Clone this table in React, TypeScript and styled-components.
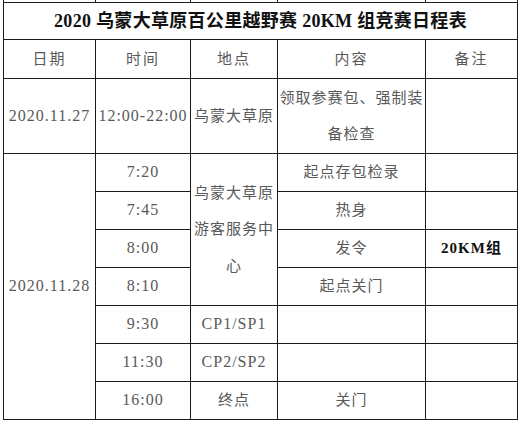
import React from "react";
import styled, { createGlobalStyle } from "styled-components";

const Global = createGlobalStyle`
  body {
    margin: 0;
    background: #fff;
    font-family: "Liberation Serif", "Noto Sans CJK SC", serif;
  }
`;

const Sheet = styled.table`
  border-collapse: collapse;
  table-layout: fixed;
  width: 514px;
  margin-left: 3px;
  color: #555;
`;

const Row = styled.tr<{ $h: number }>`
  height: ${(p) => p.$h}px;
`;

const Cell = styled.td<{ $tone?: "title" | "head" | "mark" }>`
  border: 1px solid #1a1a1a;
  padding: 0;
  text-align: center;
  vertical-align: middle;
  font-size: ${(p) => (p.$tone === "title" ? 18 : 15)}px;
  font-weight: ${(p) => (p.$tone === "title" || p.$tone === "mark" ? 700 : 400)};
  color: ${(p) => (p.$tone === "title" || p.$tone === "mark" ? "#111" : "#595959")};
  letter-spacing: ${(p) => (p.$tone === "head" ? 2 : p.$tone === "title" ? 0.3 : 1)}px;
  line-height: 36.5px;
  white-space: nowrap;
`;

const Edge = styled.td`
  border: 1px solid #1a1a1a;
  border-top: none;
  padding: 0;
  font-size: 0;
`;

const Num = styled.span`
  font-family: "Liberation Serif", serif;
  font-size: 16px;
  letter-spacing: 1px;
`;

type Slot = { time: string; place?: React.ReactNode; span?: number; what?: string; note?: string };

const slots: Slot[] = [
  { time: "7:20", place: <>乌蒙大草原<br />游客服务中<br />心</>, span: 4, what: "起点存包检录" },
  { time: "7:45", what: "热身" },
  { time: "8:00", what: "发令", note: "20KM组" },
  { time: "8:10", what: "起点关门" },
  { time: "9:30", place: <Num>CP1/SP1</Num>, span: 1 },
  { time: "11:30", place: <Num>CP2/SP2</Num>, span: 1 },
  { time: "16:00", place: "终点", span: 1, what: "关门" },
];

export default function App() {
  return (
    <>
      <Global />
      <Sheet>
        <colgroup>
          <col style={{ width: 92 }} />
          <col style={{ width: 95 }} />
          <col style={{ width: 87 }} />
          <col style={{ width: 148 }} />
          <col style={{ width: 92 }} />
        </colgroup>
        <tbody>
          <Row $h={2}>
            <Edge />
            <Edge />
            <Edge />
            <Edge />
            <Edge />
          </Row>
          <Row $h={36}>
            <Cell colSpan={5} $tone="title">
              2020 乌蒙大草原百公里越野赛 20KM 组竞赛日程表
            </Cell>
          </Row>
          <Row $h={39}>
            <Cell $tone="head">日期</Cell>
            <Cell $tone="head">时间</Cell>
            <Cell $tone="head">地点</Cell>
            <Cell $tone="head">内容</Cell>
            <Cell $tone="head">备注</Cell>
          </Row>
          <Row $h={75}>
            <Cell><Num>2020.11.27</Num></Cell>
            <Cell><Num>12:00-22:00</Num></Cell>
            <Cell>乌蒙大草原</Cell>
            <Cell>领取参赛包、强制装<br />备检查</Cell>
            <Cell />
          </Row>
          {slots.map((s, i) => (
            <Row $h={38} key={s.time}>
              {i === 0 && (
                <Cell rowSpan={slots.length}><Num>2020.11.28</Num></Cell>
              )}
              <Cell><Num>{s.time}</Num></Cell>
              {s.span && <Cell rowSpan={s.span}>{s.place}</Cell>}
              <Cell>{s.what}</Cell>
              <Cell $tone="mark">{s.note}</Cell>
            </Row>
          ))}
        </tbody>
      </Sheet>
    </>
  );
}
